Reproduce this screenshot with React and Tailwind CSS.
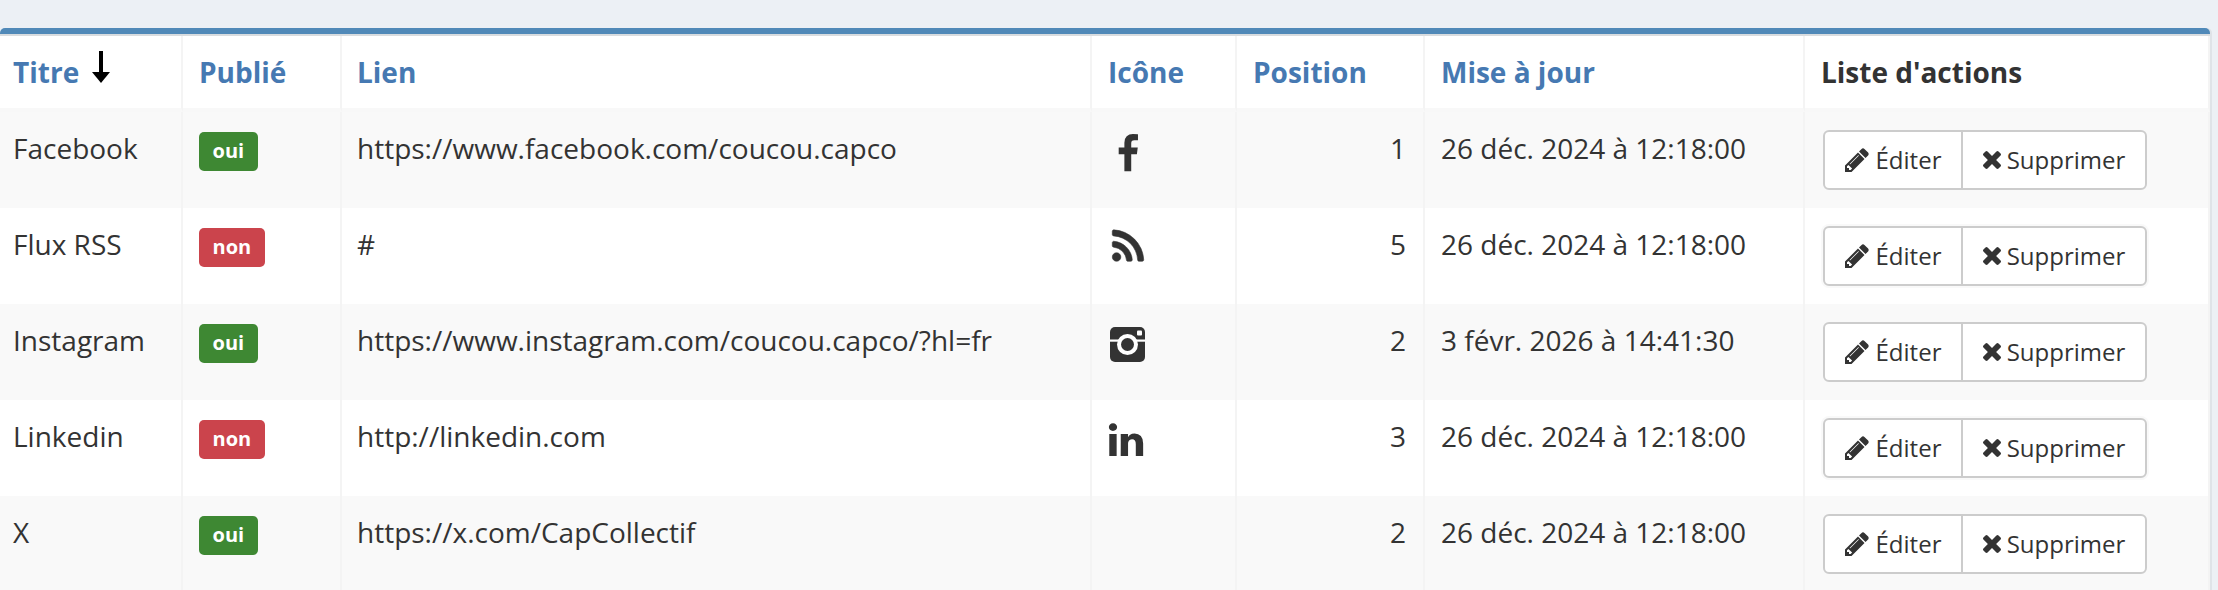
const rows = [
  { t: "Facebook", on: true, l: "https://www.facebook.com/coucou.capco", i: "fb", p: 1, d: "26 déc. 2024 à 12:18:00" },
  { t: "Flux RSS", on: false, l: "#", i: "rss", p: 5, d: "26 déc. 2024 à 12:18:00" },
  { t: "Instagram", on: true, l: "https://www.instagram.com/coucou.capco/?hl=fr", i: "ig", p: 2, d: "3 févr. 2026 à 14:41:30" },
  { t: "Linkedin", on: false, l: "http://linkedin.com", i: "li", p: 3, d: "26 déc. 2024 à 12:18:00" },
  { t: "X", on: true, l: "https://x.com/CapCollectif", i: null, p: 2, d: "26 déc. 2024 à 12:18:00" },
];

const paths = {
  fb: "M1343 12v264h-157q-86 0-116 36t-30 108v189h293l-39 296h-254v759h-306v-759h-255v-296h255v-218q0-186 104-288.500t277-102.500q147 0 228 12z",
  rss: "M576 1344q0 80-56 136t-136 56-136-56-56-136 56-136 136-56 136 56 56 136zm512 123q2 28-17 48-18 21-47 21h-135q-25 0-43-16.500t-20-41.500q-22-229-184.500-391.500t-391.500-184.500q-25-2-41.500-20t-16.500-43v-135q0-29 21-47 17-17 43-17h5q160 13 306 80.500t259 181.500q114 113 181.500 259t80.500 306zm512 2q2 27-18 47-18 20-46 20h-143q-26 0-44.500-17.500t-19.500-42.500q-12-215-101-408.500t-231.500-336-336-231.500-408.500-102q-25-1-42.500-19.500t-17.500-43.500v-143q0-28 20-46 18-18 44-18h3q262 13 501.500 120t425.500 294q187 186 294 425.500t120 501.500z",
  li: "M477 625v991h-330v-991h330zm21-306q1 73-50.500 122t-135.500 49h-2q-82 0-132-49t-50-122q0-74 51.500-122.500t134.500-48.500 133 48.500 51 122.500zm1166 729v568h-329v-530q0-105-40.500-164.500t-126.500-59.500q-63 0-105.500 34.500t-63.500 85.500q-11 30-11 81v553h-329q2-399 2-647t-1-296l-1-48h329v144h-2q20-32 41-56t56.500-52 87-43.500 114.500-15.500q171 0 275 113.500t104 332.500z",
};

const iconClass = {
  fb: "w-[40px] h-[40px] block mt-[3px]",
  rss: "w-[40px] h-[40px] block mt-0",
  li: "w-[40px] h-[40px] block mt-[1px] -ml-[2px]",
};

function Icon({ name }) {
  if (!name) return null;
  if (name === "ig") {
    return (
      <svg viewBox="0 0 35 35" className="w-[35px] h-[35px] block ml-[2px] mt-[4px]">
        <path fill="#333" d="M5 0h25a5 5 0 0 1 5 5v25a5 5 0 0 1-5 5H5a5 5 0 0 1-5-5V5a5 5 0 0 1 5-5z" />
        <rect x="0" y="12.500" width="35" height="2.200" fill="#fff" />
        <circle cx="17.500" cy="17.500" r="10.500" fill="#fff" />
        <circle cx="17.500" cy="17.500" r="6.500" fill="#333" />
        <rect x="27" y="3.500" width="5" height="5" rx="1" fill="#fff" />
      </svg>
    );
  }
  return (
    <svg viewBox="0 0 1792 1792" className={iconClass[name]} fill="#333">
      <path d={paths[name]} stroke={name === "rss" ? "#333" : "none"} strokeWidth={name === "rss" ? 25 : 0} />
    </svg>
  );
}

function Pencil() {
  return (
    <svg viewBox="128 128 1536 1536" className="w-[24px] h-[24px] shrink-0" fill="#333">
      <path d="M491 1536l91-91-235-235-91 91v107h128v128h107zm523-928q0-22-22-22-10 0-17 7l-542 542q-7 7-7 17 0 22 22 22 10 0 17-7l542-542q7-7 7-17zm-54-192l416 416-832 832h-416v-416zm683 96q0 53-37 90l-166 166-416-416 166-165q36-38 90-38 53 0 91 38l235 234q37 39 37 91z" />
    </svg>
  );
}

function Times() {
  return (
    <svg viewBox="110 366 1188 1188" className="w-[18px] h-[18px] shrink-0" fill="#333">
      <path d="M1298 1322q0 40-28 68l-136 136q-28 28-68 28t-68-28l-294-294-294 294q-28 28-68 28t-68-28l-136-136q-28-28-28-68t28-68l294-294-294-294q-28-28-28-68t28-68l136-136q28-28 68-28t68 28l294 294 294-294q28-28 68-28t68 28l136 136q28 28 28 68t-28 68l-294 294 294 294q28 28 28 68z" />
    </svg>
  );
}

function Arrow() {
  return (
    <svg viewBox="0 0 18 32" className="w-[18px] h-[32px] absolute left-[92px] top-[15px]" fill="#000">
      <rect x="7" y="0" width="4" height="24" />
      <path d="M0 21h18l-9 11z" />
    </svg>
  );
}

const th = "relative h-[76px] border-r-2 border-b-4 border-r-[#f4f4f4] border-b-[#f8f8f8] pl-[16px] pr-[16px] text-left align-middle font-bold text-[#4679b2] whitespace-nowrap";
const td = "h-[96px] border-r-2 border-[#f4f4f4] pl-[16px] pr-[16px] pt-[19px] align-top whitespace-nowrap";

export default function App() {
  return (
    <div className="h-[590px] overflow-hidden bg-[#ecf0f5] pt-[28px] pr-[8px] font-['Open_Sans',sans-serif] text-[28px] leading-[34px] text-[#333]">
      <div className="rounded-t-[5px] border-t-[6px] border-[#5089b8] bg-white shadow-[2px_0_0_#dfe3e8]">
        <div className="h-[2px] bg-[#d8dcdf]" />
        <table className="w-[2210px] table-fixed border-separate border-spacing-0">
          <colgroup>
            <col className="w-[183px]" />
            <col className="w-[159px]" />
            <col className="w-[750px]" />
            <col className="w-[145px]" />
            <col className="w-[188px]" />
            <col className="w-[380px]" />
            <col className="w-[405px]" />
          </colgroup>
          <thead>
            <tr>
              <th className={th + " !pl-[13px]"}>Titre<Arrow /></th>
              <th className={th}>Publié</th>
              <th className={th + " !pl-[15px]"}>Lien</th>
              <th className={th}>Icône</th>
              <th className={th}>Position</th>
              <th className={th}>Mise à jour</th>
              <th className={th + " !text-[#333] border-r-0"}>Liste d'actions</th>
            </tr>
          </thead>
          <tbody>
            {rows.map((r, idx) => (
              <tr key={r.t} className={idx % 2 === 0 ? "bg-[#f9f9f9]" : "bg-white"}>
                <td className={td + " !pl-[13px]"}>{r.t}</td>
                <td className={td}>
                  <span className={"mt-[1px] inline-block h-[39px] rounded-[5px] px-[13.500px] text-[20px] font-bold leading-[37px] text-white align-top " + (r.on ? "bg-[#3e8833]" : "bg-[#cb444c]")}>
                    {r.on ? "oui" : "non"}
                  </span>
                </td>
                <td className={td + " !pl-[15px]"}>{r.l}</td>
                <td className={td}><Icon name={r.i} /></td>
                <td className={td + " text-right !pr-[17px]"}>{r.p}</td>
                <td className={td}>{r.d}</td>
                <td className={td + " border-r-0"}>
                  <div className="-mt-[1px] ml-[2px] flex h-[60px] w-[324px] rounded-[6px] border-2 border-[#ccc] bg-white text-[24px] ring-2 ring-[#f9f9f9]">
                    <span className="flex w-[138px] items-center justify-center gap-[7px] border-r-2 border-[#ccc]"><Pencil />Éditer</span>
                    <span className="flex flex-1 items-center justify-center gap-[6px]"><Times />Supprimer</span>
                  </div>
                </td>
              </tr>
            ))}
          </tbody>
        </table>
      </div>
    </div>
  );
}
